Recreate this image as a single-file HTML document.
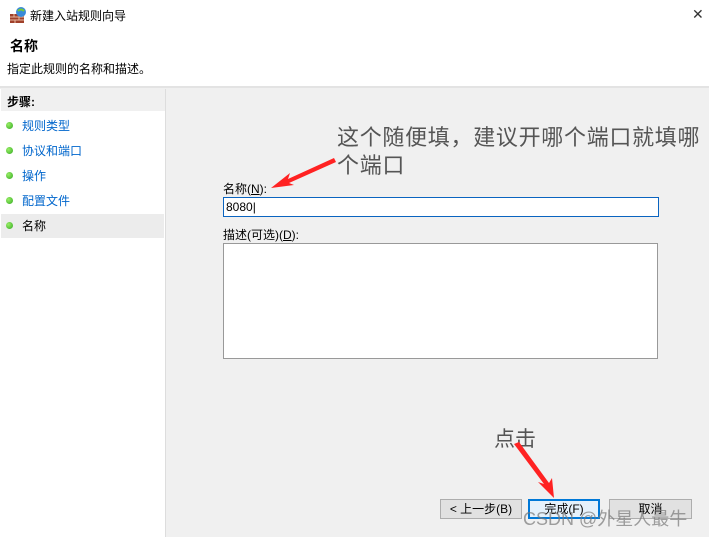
<!DOCTYPE html>
<html><head><meta charset="utf-8"><style>
body{margin:0;width:709px;height:537px;overflow:hidden;background:#f0f0f0;font-family:"Liberation Sans","Noto Sans CJK SC",sans-serif;font-size:12px;color:#000;position:relative}
.a{position:absolute}
.s{height:25px;line-height:25px}
.d{display:inline-block;width:7px;height:7px;border-radius:50%;background:radial-gradient(circle at 35% 35%,#9e6,#3a2);margin-right:9px;vertical-align:middle;position:relative;top:-1px}
</style></head><body>
<div class="a" style="left:0;top:0;width:709px;height:87px;background:#fff"></div>
<div class="a" style="left:0;top:86px;width:709px;height:2px;background:#e3e3e3"></div>
<svg class="a" style="left:9px;top:6px" width="18" height="18"><rect x="1" y="8" width="14" height="9" fill="#a0402a"/><path d="M1 11h14M1 14h14M5 8v3M10 11v3M6 14v3" stroke="#e6b8a0" stroke-width="1"/><circle cx="12" cy="6" r="5" fill="#3a8ad8"/><path d="M9 5q3-3 6 0" stroke="#7c3" stroke-width="2" fill="none"/></svg>
<div class="a" style="left:30px;top:7px;font-size:12px">新建入站规则向导</div>
<div class="a" style="left:692px;top:6px;font-size:14px;color:#333">✕</div>
<div class="a" style="left:10px;top:36px;font-size:14px;font-weight:bold">名称</div>
<div class="a" style="left:7px;top:60px">指定此规则的名称和描述。</div>
<div class="a" style="left:0;top:89px;width:165px;height:448px;background:#fff;border-right:1px solid #ddd"></div>
<div class="a" style="left:1px;top:89px;width:164px;height:22px;background:#f0f0f0"></div>
<div class="a" style="left:7px;top:93px;font-weight:bold">步骤:</div>
<div class="a" style="left:1px;top:214px;width:163px;height:24px;background:#ececec"></div>
<div class="a" style="left:6px;top:114px;color:#0066cc">
<div class="s"><span class="d"></span>规则类型</div>
<div class="s"><span class="d"></span>协议和端口</div>
<div class="s"><span class="d"></span>操作</div>
<div class="s"><span class="d"></span>配置文件</div>
<div class="s" style="color:#000"><span class="d"></span>名称</div>
</div>
<div class="a" style="left:337px;top:124px;font-size:22px;color:#555;line-height:28px;white-space:nowrap;letter-spacing:0.7px">这个随便填，建议开哪个端口就填哪<br>个端口</div>
<div class="a" style="left:223px;top:180px">名称(<u>N</u>):</div>
<div class="a" style="left:223px;top:197px;width:432px;height:18px;background:#fff;border:1px solid #0a64c0;padding-left:2px;line-height:18px">8080|</div>
<svg class="a" style="left:268px;top:155px" width="70" height="40"><path d="M66 3L20 24 22 18 3 33 26 30 21 28 68 7z" fill="#f22"/></svg>
<div class="a" style="left:223px;top:226px">描述(可选)(<u>D</u>):</div>
<div class="a" style="left:223px;top:243px;width:433px;height:114px;background:#fff;border:1px solid #999"></div>
<div class="a" style="left:494px;top:423px;font-size:21px;color:#555">点击</div>
<svg class="a" style="left:510px;top:442px" width="50" height="58"><path d="M4 2L34 42 28 40 44 56 42 36 39 41 9 0z" fill="#f22"/></svg>
<div class="a" style="left:440px;top:499px;width:80px;height:18px;border:1px solid #adadad;background:#e1e1e1;text-align:center;line-height:18px">&lt; 上一步(B)</div>
<div class="a" style="left:528px;top:499px;width:70px;height:18px;border:1px solid #0078d7;box-shadow:inset 0 0 0 1px #0078d7;background:#e5f1fb;text-align:center;line-height:18px">完成(F)</div>
<div class="a" style="left:609px;top:499px;width:81px;height:18px;border:1px solid #adadad;background:#e1e1e1;text-align:center;line-height:18px">取消</div>
<div class="a" style="left:523px;top:505px;font-size:18px;color:rgba(120,120,120,.7)">CSDN @外星人最牛</div>
</body></html>
